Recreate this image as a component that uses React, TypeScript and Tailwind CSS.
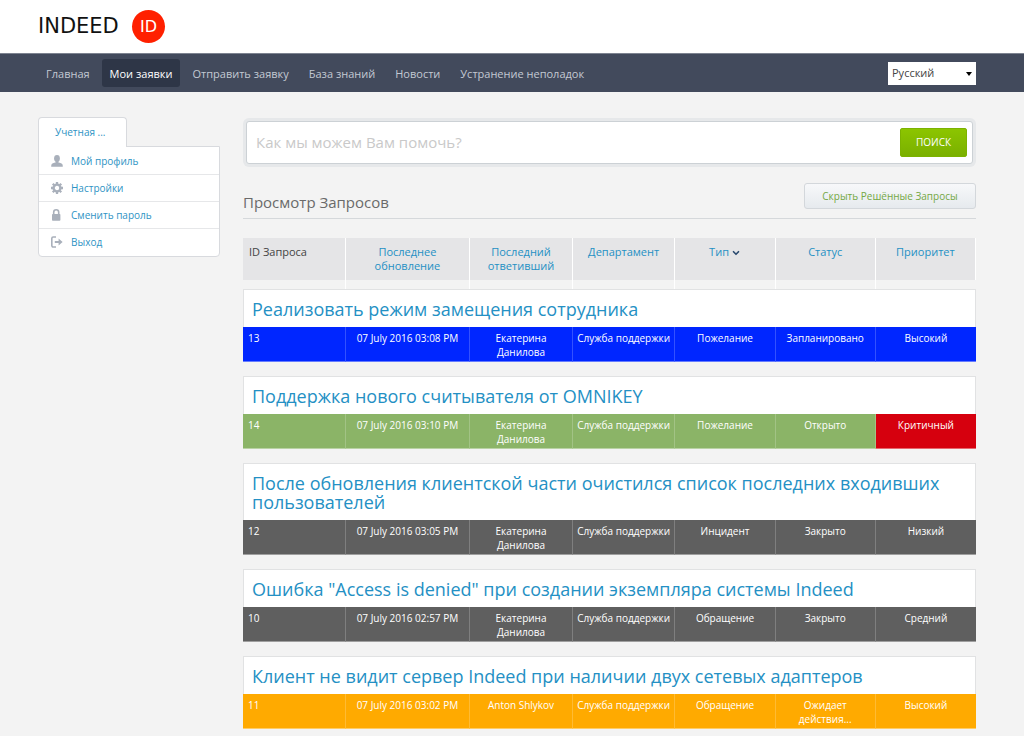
import React, { useState } from 'react';
import { ChevronDown } from 'lucide-react';

interface Ticket {
  id: number;
  subject: string;
  updated: string;
  replier: string;
  department: string;
  type: string;
  status: string;
  priority: string;
  color: string;
  priorityColor?: string;
}

const navItems = ['Главная', 'Мои заявки', 'Отправить заявку', 'База знаний', 'Новости', 'Устранение неполадок'];

const UserIcon = () => (
  <svg width="12" height="12" viewBox="0 0 12 12" fill="currentColor">
    <ellipse cx="6" cy="3.4" rx="2.9" ry="3.4" />
    <path d="M4.6 6h2.8v1.6c1.8.4 3.8 1.1 4.1 2 .2.6.3 1.3.3 2.2H.2c0-.9.1-1.6.3-2.2.3-.9 2.3-1.6 4.1-2z" />
  </svg>
);

const GearIcon = () => (
  <svg width="12" height="12" viewBox="0 0 12 12" fill="none" stroke="currentColor">
    <circle cx="6" cy="6" r="3.4" strokeWidth="2.4" />
    <path
      d="M6 0v2M6 10v2M0 6h2M10 6h2M1.8 1.8l1.4 1.4M8.8 8.8l1.4 1.4M1.8 10.2l1.4-1.4M8.8 3.2l1.4-1.4"
      strokeWidth="2.3"
    />
  </svg>
);

const LockIcon = () => (
  <svg width="12" height="12" viewBox="0 0 12 12">
    <rect x="1" y="5" width="8.4" height="6.8" rx="0.8" fill="currentColor" />
    <path d="M2.7 5.5V3.3a2.5 2.5 0 0 1 5 0v2.2" fill="none" stroke="currentColor" strokeWidth="1.6" />
  </svg>
);

const ExitIcon = () => (
  <svg width="12" height="12" viewBox="0 0 12 12">
    <path d="M5 1H2.2A1.4 1.4 0 0 0 .8 2.4v7.2A1.4 1.4 0 0 0 2.2 11H5" fill="none" stroke="currentColor" strokeWidth="1.6" />
    <path d="M3.8 4.9h3.8V2.6L11.6 6 7.6 9.4V7.1H3.8z" fill="currentColor" />
  </svg>
);

const accountLinks = [
  { label: 'Мой профиль', icon: UserIcon },
  { label: 'Настройки', icon: GearIcon },
  { label: 'Сменить пароль', icon: LockIcon },
  { label: 'Выход', icon: ExitIcon },
];

const columns = [
  { label: 'Последнее обновление' },
  { label: 'Последний ответивший' },
  { label: 'Департамент' },
  { label: 'Тип', sorted: true },
  { label: 'Статус' },
  { label: 'Приоритет' },
];

const tickets: Ticket[] = [
  {
    id: 13,
    subject: 'Реализовать режим замещения сотрудника',
    updated: '07 July 2016 03:08 PM',
    replier: 'Екатерина Данилова',
    department: 'Служба поддержки',
    type: 'Пожелание',
    status: 'Запланировано',
    priority: 'Высокий',
    color: 'bg-[#0026ff]',
  },
  {
    id: 14,
    subject: 'Поддержка нового считывателя от OMNIKEY',
    updated: '07 July 2016 03:10 PM',
    replier: 'Екатерина Данилова',
    department: 'Служба поддержки',
    type: 'Пожелание',
    status: 'Открыто',
    priority: 'Критичный',
    color: 'bg-[#8bb467]',
    priorityColor: 'bg-[#d6000e]',
  },
  {
    id: 12,
    subject: 'После обновления клиентской части очистился список последних входивших пользователей',
    updated: '07 July 2016 03:05 PM',
    replier: 'Екатерина Данилова',
    department: 'Служба поддержки',
    type: 'Инцидент',
    status: 'Закрыто',
    priority: 'Низкий',
    color: 'bg-[#5f5f5f]',
  },
  {
    id: 10,
    subject: 'Ошибка "Access is denied" при создании экземпляра системы Indeed',
    updated: '07 July 2016 02:57 PM',
    replier: 'Екатерина Данилова',
    department: 'Служба поддержки',
    type: 'Обращение',
    status: 'Закрыто',
    priority: 'Средний',
    color: 'bg-[#5f5f5f]',
  },
  {
    id: 11,
    subject: 'Клиент не видит сервер Indeed при наличии двух сетевых адаптеров',
    updated: '07 July 2016 03:02 PM',
    replier: 'Anton Shlykov',
    department: 'Служба поддержки',
    type: 'Обращение',
    status: 'Ожидает действия...',
    priority: 'Высокий',
    color: 'bg-[#ffaa00]',
  },
];

const Logo = () => (
  <a href="#" className="flex items-center font-['DejaVu_Sans',sans-serif]">
    <span className="w-[94px] text-[21px] leading-none text-[#111]">INDEED</span>
    <span className="flex h-[33px] w-[33px] items-center justify-center rounded-full bg-[#ff2000] text-[16px] leading-none text-white">
      ID
    </span>
  </a>
);

const Header = () => {
  const [language, setLanguage] = useState('ru');

  return (
    <header>
      <div className="flex h-[53px] items-center bg-white pl-[38px]">
        <Logo />
      </div>
      <div className="flex h-[39px] items-center justify-between border-t border-[#7d8390] bg-[#424a5c] pr-12 pl-[38px]">
        <nav className="flex gap-1">
          {navItems.map((item) => (
            <a
              key={item}
              href="#"
              className={`flex h-7 items-center rounded-[3px] px-2 pt-[2px] text-[11px] ${
                item === 'Мои заявки' ? 'bg-[#2e3647] text-white' : 'text-[#c3c9d3]'
              }`}
            >
              {item}
            </a>
          ))}
        </nav>
        <div className="relative flex">
          <select
            aria-label="Язык"
            value={language}
            onChange={(e) => setLanguage(e.target.value)}
            className="h-[23px] w-[88px] appearance-none bg-white pl-1 text-[11px] text-[#444]"
          >
            <option value="ru">Русский</option>
            <option value="en">English</option>
          </select>
          <span className="pointer-events-none absolute top-[10px] right-1 border-x-[3px] border-t-[4px] border-x-transparent border-t-black" />
        </div>
      </div>
    </header>
  );
};

const AccountMenu = () => (
  <aside className="w-[182px] shrink-0 text-[10px] text-[#2e93c4]">
    <div className="relative z-10 -mb-px flex h-[30px] w-[89px] items-center rounded-t border border-b-0 border-[#d8dade] bg-white pl-4">
      Учетная ...
    </div>
    <ul className="rounded-b border border-[#d8dade] bg-white py-px">
      {accountLinks.map(({ label, icon: Icon }) => (
        <li key={label} className="border-b border-[#e6e7e9] last:border-b-0">
          <a href="#" className="flex h-[26px] items-center gap-2 pl-3">
            <span className="text-[#a9b0bb]">
              <Icon />
            </span>
            {label}
          </a>
        </li>
      ))}
    </ul>
  </aside>
);

const SearchBar = () => {
  const [query, setQuery] = useState('');

  return (
    <form
      onSubmit={(e) => e.preventDefault()}
      className="mr-[3px] ml-[3px] flex h-[43px] items-center rounded-[3px] border border-[#ccd1d5] bg-white pr-[5px] pl-[9px] ring-3 ring-[#e6e8ea]"
    >
      <input
        aria-label="Поиск"
        value={query}
        onChange={(e) => setQuery(e.target.value)}
        placeholder="Как мы можем Вам помочь?"
        className="min-w-0 flex-1 text-[15px] text-[#555] outline-none placeholder:text-[#c9c9c9]"
      />
      <button
        type="submit"
        className="h-[29px] w-[67px] rounded-[2px] border border-[#7cb200] bg-linear-to-b from-[#8cc500] to-[#7ab000] text-[10px] text-white"
      >
        ПОИСК
      </button>
    </form>
  );
};

const TicketRows = ({ ticket }: { ticket: Ticket }) => {
  const cells = [ticket.updated, ticket.replier, ticket.department, ticket.type, ticket.status];

  return (
    <tbody>
      <tr>
        <td colSpan={7} className="border border-b-0 border-[#e1e2e3] bg-white px-2 pt-[10px] pb-2">
          <a href="#" className="block text-[18px] leading-[19px] text-[#2490c4]">
            {ticket.subject}
          </a>
        </td>
      </tr>
      <tr className={`h-[35px] text-center align-top text-[10px] leading-[14px] text-white ${ticket.color}`}>
        <td className="border-r border-b border-white/20 border-b-white/40 pt-1 pl-[5px] text-left">{ticket.id}</td>
        {cells.map((cell, i) => (
          <td key={i} className="border-r border-b border-white/20 border-b-white/40 px-1 pt-1">
            {cell}
          </td>
        ))}
        <td className={`border-b border-white/40 px-1 pt-1 ${ticket.priorityColor ?? ''}`}>{ticket.priority}</td>
      </tr>
      <tr className="h-[14px]">
        <td colSpan={7} />
      </tr>
    </tbody>
  );
};

const TicketTable = () => (
  <table className="mt-[19px] w-full table-fixed border-separate border-spacing-0">
    <colgroup>
      <col className="w-[14%]" />
      <col className="w-[17%]" />
      <col className="w-[14%]" />
      <col className="w-[14%]" />
      <col />
      <col />
      <col />
    </colgroup>
    <thead>
      <tr className="h-[42px] bg-[#e5e5e7] align-top text-[11px] leading-[14px] text-[#2490c4]">
        <th className="border-r border-white pt-[7px] pl-[6px] text-left font-normal text-[#444]">ID Запроса</th>
        {columns.map((col) => (
          <th key={col.label} className="border-r border-white px-3 pt-[7px] font-medium">
            <button type="button">
              {col.label}
              {col.sorted && <ChevronDown size={10} strokeWidth={4} className="ml-[2px] inline text-[#2b4a6f]" />}
            </button>
          </th>
        ))}
      </tr>
      <tr className="h-[9px]">
        {[1, 2, 3, 4, 5, 6].map((n) => (
          <td key={n} className="border-r border-white" />
        ))}
        <td />
      </tr>
    </thead>
    {tickets.map((ticket) => (
      <TicketRows key={ticket.id} ticket={ticket} />
    ))}
  </table>
);

const App: React.FC = () => {
  return (
    <div className="min-h-screen bg-[#f3f3f3] font-['Open_Sans','Noto_Sans',sans-serif]">
      <Header />
      <div className="flex items-start gap-[23px] pt-[25px] pr-12 pl-[38px]">
        <AccountMenu />
        <main className="min-w-0 flex-1 pt-1">
          <SearchBar />
          <div className="mt-[19px] flex h-[36px] items-start justify-between border-b border-[#d5d8db]">
            <h1 className="pt-[7px] text-[15px] leading-6 text-[#6a6a6a]">Просмотр Запросов</h1>
            <button
              type="button"
              className="h-[26px] w-[172px] rounded-[3px] border border-[#d3d7db] bg-linear-to-b from-[#f7f8fa] to-[#e6eaee] text-[10px] text-[#74a844]"
            >
              Скрыть Решённые Запросы
            </button>
          </div>
          <TicketTable />
        </main>
      </div>
    </div>
  );
};

export default App;
